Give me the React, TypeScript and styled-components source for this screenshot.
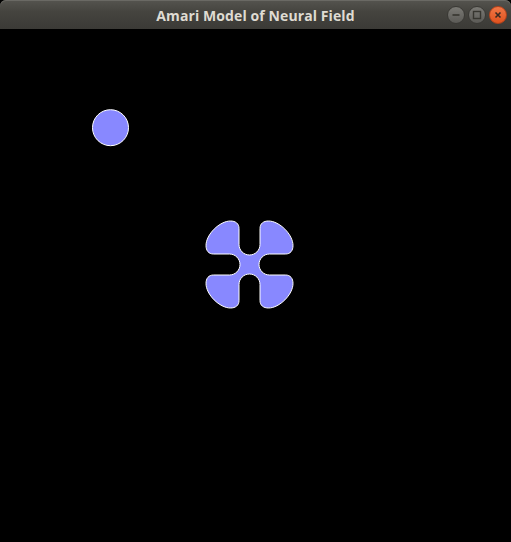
import React from 'react';
import styled, { createGlobalStyle } from 'styled-components';

const GlobalStyle = createGlobalStyle`
  html, body {
    margin: 0;
    padding: 0;
    background: #000;
  }
`;

const Window = styled.div`
  width: 511px;
  height: 542px;
  display: flex;
  flex-direction: column;
  background: #000;
  overflow: hidden;
`;

const TitleBar = styled.div`
  height: 29px;
  flex: 0 0 29px;
  position: relative;
  display: flex;
  align-items: center;
  justify-content: center;
  border-radius: 6px 6px 0 0;
  background: linear-gradient(to bottom, #55544f 0%, #45443f 40%, #3b3a36 100%);
  box-shadow: inset 0 1px 0 #6a6964;
`;

const Title = styled.span`
  font-family: 'Open Sans', 'DejaVu Sans', sans-serif;
  font-weight: 700;
  font-size: 14px;
  color: #dfdbd2;
  letter-spacing: 0.1px;
  margin-top: 1px;
`;

const Controls = styled.div`
  position: absolute;
  right: 4px;
  top: 6px;
  display: flex;
  gap: 3px;
`;

const WinButton = styled.div<{ $close?: boolean }>`
  width: 18px;
  height: 18px;
  border-radius: 50%;
  display: flex;
  align-items: center;
  justify-content: center;
  box-sizing: border-box;
  border: 1px solid ${(p) => (p.$close ? '#b5421b' : '#3a3935')};
  background: ${(p) =>
    p.$close
      ? 'linear-gradient(to bottom, #f07746, #e0521e)'
      : 'linear-gradient(to bottom, #7a7974, #5b5a56)'};
`;

const Canvas = styled.div`
  flex: 1;
  background: #000;
  position: relative;
`;

const Field = styled.svg`
  display: block;
`;

// outline of the blob, one quadrant, rotated round the centre
type Pt = [number, number];
const quadrant: (Pt | string)[] = [
  'C', [5.8, -9.5], [10.5, -14.2], [10.5, -20],
  'L', [10.5, -36],
  'C', [10.5, -41], [14, -43.5], [19, -43.5],
  'C', [30, -43.5], [43.5, -30], [43.5, -19],
  'C', [43.5, -14], [41, -10.5], [36, -10.5],
  'L', [20, -10.5],
  'C', [14.2, -10.5], [9.5, -5.8], [9.5, 0],
];

function blobPath(cx: number, cy: number) {
  let d = `M ${cx} ${cy - 9.5}`;
  for (let r = 0; r < 4; r++) {
    for (const item of quadrant) {
      if (typeof item === 'string') {
        d += ` ${item}`;
        continue;
      }
      let [x, y] = item;
      for (let i = 0; i < r; i++) {
        const nx = -y;
        y = x;
        x = nx;
      }
      d += ` ${(cx + x).toFixed(2)} ${(cy + y).toFixed(2)}`;
    }
  }
  return d + ' Z';
}

export default function App() {
  return (
    <>
      <GlobalStyle />
      <Window>
        <TitleBar>
          <Title>Amari Model of Neural Field</Title>
          <Controls>
            <WinButton>
              <svg width="10" height="10" viewBox="0 0 10 10">
                <line x1="1.5" y1="5" x2="8.5" y2="5" stroke="#36352f" strokeWidth="1.6" />
              </svg>
            </WinButton>
            <WinButton>
              <svg width="10" height="10" viewBox="0 0 10 10">
                <rect x="1.5" y="1.5" width="7" height="7" fill="none" stroke="#36352f" strokeWidth="1.4" />
              </svg>
            </WinButton>
            <WinButton $close>
              <svg width="10" height="10" viewBox="0 0 10 10">
                <path d="M2.5 2.5 L7.5 7.5 M7.5 2.5 L2.5 7.5" stroke="#3a2a22" strokeWidth="1.6" />
              </svg>
            </WinButton>
          </Controls>
        </TitleBar>
        <Canvas>
          <Field width="511" height="513" viewBox="0 29 511 513">
            <circle cx="110.5" cy="127.7" r="18" fill="#8888ff" stroke="#ffffff" strokeWidth="1" />
            <path d={blobPath(249.5, 264.5)} fill="#8888ff" stroke="#ffffff" strokeWidth="1" />
          </Field>
        </Canvas>
      </Window>
    </>
  );
}
